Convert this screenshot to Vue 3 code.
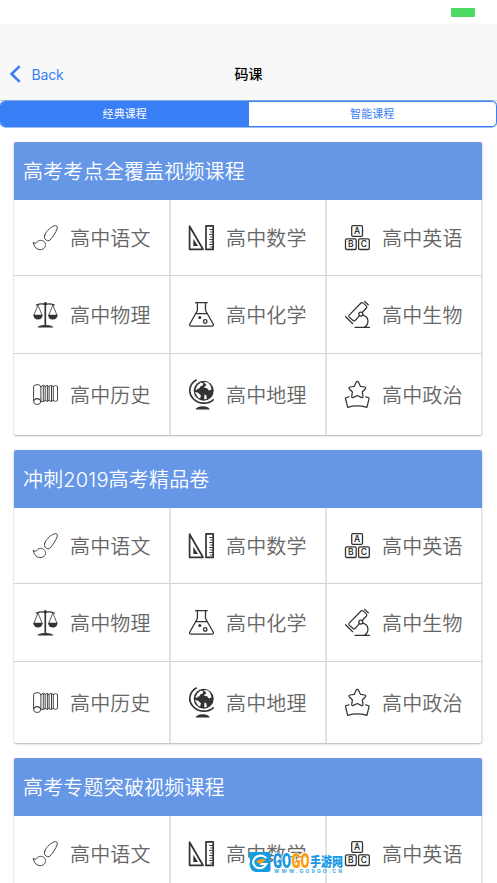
<script setup>
import { ref } from 'vue'

const active = ref(0)
const tabs = ['经典课程', '智能课程']
const subjects = [
  { name: '高中语文', icon: 'brush' },
  { name: '高中数学', icon: 'ruler' },
  { name: '高中英语', icon: 'blocks' },
  { name: '高中物理', icon: 'scales' },
  { name: '高中化学', icon: 'flask' },
  { name: '高中生物', icon: 'microscope' },
  { name: '高中历史', icon: 'books' },
  { name: '高中地理', icon: 'globe' },
  { name: '高中政治', icon: 'star' }
]
const sections = ['高考考点全覆盖视频课程', '冲刺2019高考精品卷', '高考专题突破视频课程']
</script>

<template>
  <div class="page">
    <div class="status"><span class="battery"></span></div>
    <header class="nav">
      <button class="back">
        <svg class="chevron" viewBox="0 0 12 18"><path d="M9.700 1.200 1.600 9l8.100 7.800" /></svg>
        <span>Back</span>
      </button>
      <h1 class="nav-title">码课</h1>
    </header>
    <nav class="segment">
      <button v-for="(tab, i) in tabs" :key="tab" class="tab" :class="{ active: i === active }" @click="active = i">{{ tab }}</button>
    </nav>

    <main class="list">
      <section v-for="title in sections" :key="title" class="card">
        <h2 class="card-title">{{ title }}</h2>
        <div class="grid">
          <div v-for="s in subjects" :key="s.name" class="cell">
            <svg class="icon" viewBox="0 0 27 32">
              <g v-if="s.icon === 'brush'" class="thin">
                <path d="M12.700 13.200C13.500 10.200 17.500 5.800 22 3.900Q25.700 2.800 25.300 6.200C24.100 10.300 20.300 15.700 17.800 18.300Q15.400 19.700 13.300 17.500 11.900 16 12.700 13.200Z" />
                <path d="M1.300 20.800Q3.500 22 4.500 20.700C6.500 17.600 10.300 18 12 19.600 14.500 22 13.700 25.400 11 27 7 29 2.300 26.500 1.300 20.800Z" />
              </g>
              <g v-else-if="s.icon === 'ruler'" class="bold">
                <path d="M1.600 4.200V27.300H15Z" /><path class="fill" d="M5.300 16.800V24H10Z" />
                <rect x="18" y="3.900" width="7.200" height="23.500" />
                <path class="tick" d="M21.500 7.500H25M22.500 10H25M21.500 12.500H25M22.500 15H25M21.500 17.500H25M22.500 20H25M21.500 22.500H25M22.500 25H25" />
              </g>
              <g v-else-if="s.icon === 'blocks'" class="line">
                <rect x="7.700" y="3.700" width="10.800" height="10.600" rx="1.300" />
                <rect x="1.500" y="16.800" width="10.700" height="10.700" rx="1.300" />
                <rect x="14.600" y="16.800" width="10.700" height="10.700" rx="1.300" />
                <text x="13.100" y="12.200">A</text><text x="6.900" y="25.300">B</text><text x="20" y="25.300">C</text>
              </g>
              <g v-else-if="s.icon === 'scales'" class="line">
                <circle class="fill" cx="13.300" cy="4.500" r="1.600" />
                <path d="M4.300 6Q9 4.200 13.300 5.400 17.700 4.200 22.300 6" />
                <path class="post" d="M13.300 5V27" />
                <path class="fine" d="M6 6 2 16M6 6 10 16M20.800 6 16.900 16M20.800 6 24.900 16" />
                <path class="fill" d="M1.200 15.700H10.800Q10 20.600 6 20.600T1.200 15.700ZM16 15.700H25.700Q25 20.600 20.800 20.600T16 15.700ZM5.200 28.600Q6 26.200 13.300 25.900 20.900 26.200 21.600 28.600Z" />
              </g>
              <g v-else-if="s.icon === 'flask'" class="line">
                <path d="M7.600 3.700H19.200M9.400 4V11.500L1.700 25.200Q1.100 27.200 3.300 27.200H23.700Q25.900 27.200 25.300 25.200L17.500 11.500V4M7.600 14.700H19.200" />
                <circle class="fill" cx="11.800" cy="18.500" r="1.500" /><circle cx="17.200" cy="22.500" r="1.800" />
              </g>
              <g v-else-if="s.icon === 'microscope'" class="medium">
                <path d="M17 4Q18 3.100 19 3.900L22.300 6.900Q23.300 7.900 22.400 9L18.200 13.500M15 17.200 11.300 21.300Q10.200 22.500 9.100 21.500L5.200 18.100Q4.300 17.100 5.200 16.100L17 4" />
                <path d="M20.700 2.500 24.300 5.800M1.600 17.700 8.700 24.700M11 28.300H25.500M18.800 16.200C25.600 18 25.300 25.700 20 28.200" />
                <circle cx="16.800" cy="15.100" r="2" />
              </g>
              <g v-else-if="s.icon === 'books'" class="thin">
                <path d="M1.600 22V8Q1.600 5.600 5.200 5.600T8.900 8V22" />
                <ellipse cx="5.200" cy="22.600" rx="3.600" ry="2.900" /><path d="M2 21Q5.200 17.800 8.600 21" />
                <path d="M9 8Q9.800 6.300 11.500 6.300 13.200 6.300 13.200 8V21Q13.200 22.400 11.500 22.400H9M13.200 7.500Q15.200 4.900 17.100 7.500V21.500Q15.200 23.500 13.200 21.500M17.100 7.500Q19.200 4.900 21.300 7.500V21.500Q19.200 23.500 17.100 21.500M21.300 7.500Q23.500 5.500 25.500 7.500V21.500Q23.500 23.500 21.300 21.500M11.300 7V22M15.400 7V22M19.500 7V22" />
              </g>
              <g v-else-if="s.icon === 'globe'" class="line">
                <circle class="fill" cx="15.700" cy="11.800" r="10" />
                <path class="land" d="M9.300 6.600 12.700 3.600 15.500 4.600 14.400 6.800 12.200 7.500 11.400 9.500 9.700 9.400 9.200 10.900 7.400 10.300ZM15.500 3.100 20 3.600 22.600 6.800 23.500 10.500 21 11.500 19 9.300 15.700 8.500 18.500 6ZM6.800 13.300 9.700 13.600 12.900 16.200 12.300 19.200 10.400 19ZM16.500 15.300 18.400 16.500 18.800 20 16.200 20.300Z" />
                <path class="orbit" d="M8.300 1C.7 5 .1 14.400 4.800 19.300 10.200 25.400 20 25.600 25.200 20.800" />
                <path class="fill" d="M7.700 30.600Q8.200 27.400 14.700 27.300 21 27.400 21.800 30.600Z" />
              </g>
              <g v-else class="medium">
                <path d="M12 3.400Q13.300 1.500 14.600 3.400L16.500 7.400 20.700 8Q22.400 8.500 21.200 10L18.300 13 19 17.400Q19 19.100 17.200 18.400L13.300 16.500 9.400 18.400Q7.500 19 7.700 17.400L8.400 13 5.400 10Q4.300 8.500 6 8L10.200 7.400Z" />
                <path d="M5 17.800 2.300 18.500Q1.300 18.800 1.600 19.800L3.700 28.400Q13.300 25.500 22.900 28.400L25 19.800Q25.300 18.800 24.300 18.500L21.700 17.800" />
              </g>
            </svg>
            <span class="name">{{ s.name }}</span>
          </div>
        </div>
      </section>
    </main>

    <svg class="watermark" viewBox="0 0 97 22">
      <path class="shape" d="M3 1H20Q23 1 22.500 5V19Q22.500 21 20 21H8Q2 20 1.500 13Q3 8 .5 5Q0 1 3 1Z" />
      <path class="ring" d="M18.500 7Q13 2.500 7.500 6.500C3.500 10 5 15.500 10 17Q15.500 18 18.200 13H12" />
      <path class="swoosh" d="M8 11Q12 6 18 9L12.500 13Z" />
      <text class="latin" x="25" y="17" textLength="18" lengthAdjust="spacingAndGlyphs">GO</text>
      <text class="latin orange" x="43.500" y="17" textLength="18" lengthAdjust="spacingAndGlyphs">GO</text>
      <text class="hanzi" x="62" y="15.200" textLength="33" lengthAdjust="spacingAndGlyphs">手游网</text>
      <text class="url" x="26" y="21.700" textLength="68">WWW.GO9GO.CN</text>
    </svg>
  </div>
</template>

<style>
body { margin: 0; background: #fff; overflow: hidden; }
</style>

<style scoped>
.page { position: relative; width: 497px; height: 883px; overflow: hidden; background: #fff; font-family: Inter, "Noto Sans CJK SC", sans-serif; }
.status { height: 24px; display: flex; justify-content: flex-end; padding: 8px 22px 0 0; box-sizing: border-box; }
.battery { width: 24px; height: 9px; border-radius: 1px; background: #4cd964; }
.nav { height: 77px; box-sizing: border-box; padding: 24px 10px 0; display: grid; grid-template-columns: 1fr auto 1fr; align-items: center; background: #f8f8f8; border-bottom: 1px solid #ccc; }
button { border: 0; margin: 0; padding: 0; background: none; font: inherit; }
.back { display: flex; align-items: center; gap: 9.500px; color: #387ef5; font-size: 14px; letter-spacing: -.15px; }
.chevron { width: 12px; height: 18px; fill: none; stroke: #387ef5; stroke-width: 2.500; }
.nav-title { margin: 0; font-size: 14px; line-height: 20px; font-weight: 500; color: #000; }
.segment { display: flex; height: 26px; box-sizing: border-box; border: 1px solid #387ef5; border-radius: 5px; overflow: hidden; box-shadow: 0 0 0 .4px #387ef5; }
.tab { flex: 1; color: #387ef5; font-size: 11px; line-height: 24px; letter-spacing: .1px; }
.tab.active { background: #387ef5; color: #fff; }
.list { padding: 15px 15px 0 14px; display: flex; flex-direction: column; gap: 15px; }
.card { height: 293px; border-radius: 2px; overflow: hidden; background: #fff; box-shadow: 0 1px 2px rgba(0, 0, 0, .3); }
.card-title { margin: 0; height: 58px; box-sizing: border-box; padding: 1px 0 0 9px; font-size: 20px; line-height: 58px; font-weight: 350; letter-spacing: .18px; color: #fff; background: #6697e6; }
.grid { display: grid; grid-template-columns: 157px 156px 155px; grid-template-rows: 76px 78px 81px; }
.cell { display: flex; align-items: center; box-sizing: border-box; padding-left: 18px; border-right: 2px solid #e2e2e2; border-bottom: 1px solid #d4d4d4; }
.cell:nth-child(3n + 2), .cell:nth-child(3n) { padding-left: 17px; }
.cell:nth-child(3n) { border-right-width: 1px; }
.cell:nth-child(n + 7) { padding-top: 1px; border-bottom: 0; }
.icon { width: 27px; height: 32px; margin-right: 11px; flex: none; fill: none; stroke: #333; stroke-linejoin: round; stroke-linecap: round; }
.name { padding-top: 2px; font-size: 20px; font-weight: 350; line-height: 30px; letter-spacing: .18px; color: #666; white-space: nowrap; }
.thin { stroke-width: 1; stroke: #444; }
.medium { stroke-width: 1.250; stroke: #333; }
.line { stroke-width: 1.300; }
.bold { stroke-width: 1.700; }
.fine { stroke-width: .8; }
.tick { stroke-width: .9; }
.post { stroke-width: 1.700; }
.orbit { stroke-width: 1.600; }
.fill { fill: #333; stroke: none; }
.land { fill: #fff; stroke: none; }
.line text { fill: #333; stroke: none; font: 600 8.500px Inter, sans-serif; text-anchor: middle; }
.watermark { position: absolute; left: 248px; top: 851px; width: 97px; height: 22px; }
.shape { fill: #159bdf; }
.ring { fill: none; stroke: #fff; stroke-width: 2.200; }
.swoosh { fill: #ff9f19; }
.latin, .hanzi { fill: #1599e5; stroke: #fff; stroke-width: 1; paint-order: stroke; }
.latin { font: 900 20px Roboto, sans-serif; }
.latin.orange { fill: #ff9c0a; }
.hanzi { font: 900 13px "Noto Sans CJK SC", sans-serif; }
.url { fill: #35aae8; font: 700 5px Inter, sans-serif; }
</style>
